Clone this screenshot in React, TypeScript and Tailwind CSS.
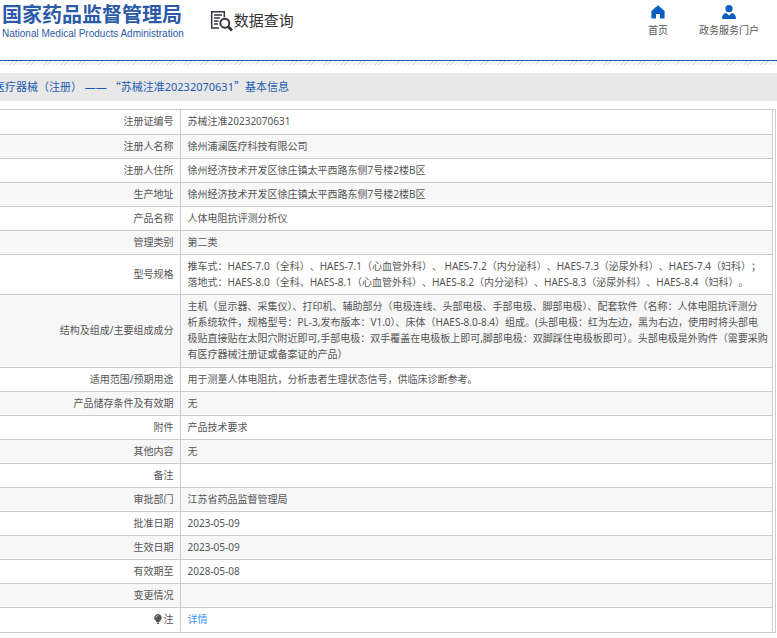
import type { ReactNode } from "react";

const detailRows: { label: string; lines: string[]; className?: string }[] = [
  { label: "注册证编号", lines: ["苏械注准20232070631"] },
  { label: "注册人名称", lines: ["徐州浦澜医疗科技有限公司"] },
  { label: "注册人住所", lines: ["徐州经济技术开发区徐庄镇太平西路东侧7号楼2楼B区"] },
  { label: "生产地址", lines: ["徐州经济技术开发区徐庄镇太平西路东侧7号楼2楼B区"] },
  { label: "产品名称", lines: ["人体电阻抗评测分析仪"] },
  { label: "管理类别", lines: ["第二类"] },
  {
    label: "型号规格",
    className: "[text-spacing-trim:space-all]",
    lines: [
      "推车式：HAES-7.0（全科）、HAES-7.1（心血管外科）、 HAES-7.2（内分泌科）、HAES-7.3（泌尿外科）、HAES-7.4（妇科）；",
      "落地式：HAES-8.0（全科、HAES-8.1（心血管外科）、HAES-8.2（内分泌科）、HAES-8.3（泌尿外科）、HAES-8.4（妇科）。",
    ],
  },
  {
    label: "结构及组成/主要组成成分",
    className: "pb-px",
    lines: [
      "主机（显示器、采集仪）、打印机、辅助部分（电极连线、头部电极、手部电极、脚部电极）、配套软件（名称：人体电阻抗评测分",
      "析系统软件，规格型号：PL-3,发布版本：V1.0）、床体（HAES-8.0-8.4）组成。(头部电极：红为左边，黑为右边，使用时将头部电",
      "极贴直接贴在太阳穴附近即可,手部电极：双手覆盖在电极板上即可,脚部电极：双脚踩住电极板即可）。头部电极是外购件（需要采购",
      "有医疗器械注册证或备案证的产品）",
    ],
  },
  { label: "适用范围/预期用途", lines: ["用于测量人体电阻抗，分析患者生理状态信号，供临床诊断参考。"] },
  { label: "产品储存条件及有效期", lines: ["无"] },
  { label: "附件", lines: ["产品技术要求"] },
  { label: "其他内容", lines: ["无"] },
  { label: "备注", lines: [] },
  { label: "审批部门", lines: ["江苏省药品监督管理局"] },
  { label: "批准日期", lines: ["2023-05-09"] },
  { label: "生效日期", lines: ["2023-05-09"] },
  { label: "有效期至", lines: ["2028-05-08"] },
  { label: "变更情况", lines: [] },
];

function SearchDocIcon() {
  return (
    <svg width="24" height="22" viewBox="0 0 24 22" fill="none" stroke="#33333b" aria-hidden="true">
      <path d="M9 18H1.700V1.700h12.600v5.500" strokeWidth="1.500" />
      <path d="M4 5h8M4 8h6M4 11h4.500M4 14h4" strokeWidth="1.300" />
      <circle cx="14.800" cy="13.200" r="4.500" strokeWidth="1.900" />
      <path d="m18 16.500 4 4" strokeWidth="2.800" />
    </svg>
  );
}

function HomeIcon() {
  return (
    <svg width="14" height="14" viewBox="0 0 14 14" fill="#0a5fc0" aria-hidden="true">
      <path d="M7 .3 13.600 6v7.600H9V9H5v4.600H.400V6z" />
    </svg>
  );
}

function UserIcon() {
  return (
    <svg width="14" height="14" viewBox="0 0 14 14" fill="#0a5fc0" aria-hidden="true">
      <circle cx="7" cy="3.700" r="3.600" />
      <path d="M0 14c0-3.800 1.500-5.500 4.200-6L7 10.500 9.800 8c2.700.500 4.200 2.200 4.200 6z" />
    </svg>
  );
}

function BulbIcon() {
  return (
    <svg width="8" height="10" viewBox="0 0 8 10" fill="#555" aria-hidden="true">
      <path d="M4 0a3.700 3.700 0 0 1 2.200 6.700L5.500 8h-3L1.800 6.700A3.700 3.700 0 0 1 4 0zM2.700 8.500h2.600L4.800 10H3.200z" />
      <path d="M2 3.500A2 2 0 0 1 3.800 1.600" stroke="#fff" strokeWidth=".7" fill="none" />
    </svg>
  );
}

function Row({ label, className, children }: { label: ReactNode; className?: string; children?: ReactNode }) {
  return (
    <tr className="h-6 border-b border-[#ccc] last:border-b-0 odd:bg-white even:bg-[#f7f7f7]">
      <th scope="row" className="w-[180px] border-r border-[#ccc] pt-[3px] pr-[6px] pb-1 text-right font-normal">
        {label}
      </th>
      <td className="pt-[3px] pb-1 pl-[7px] whitespace-nowrap">
        <div className={className}>{children}</div>
      </td>
    </tr>
  );
}

export default function App() {
  return (
    <div className="overflow-x-hidden bg-white font-['Noto_Sans','Noto_Sans_CJK_SC',sans-serif] text-[10px] leading-4 text-[#555]">
      <header className="flex h-[61px] items-start border-b border-[#1c529f] pl-[2px]">
        <div className="text-[#2b5aa8]">
          <h1 className="pt-[3px] text-[20px] leading-6 font-bold">国家药品监督管理局</h1>
          <p className="font-['Liberation_Sans',sans-serif] text-[10px] leading-[14px]">
            National Medical Products Administration
          </p>
        </div>
        <div className="ml-[26px] flex items-start pt-[10px]">
          <SearchDocIcon />
          <span className="text-[15px] leading-5 text-[#333]">数据查询</span>
        </div>
        <nav className="mr-[18px] ml-auto flex gap-[31px] pt-[5px]">
          <a href="#" className="flex flex-col items-center gap-[3px]">
            <HomeIcon />
            首页
          </a>
          <a href="#" className="flex flex-col items-center gap-[3px]">
            <UserIcon />
            政务服务门户
          </a>
        </nav>
      </header>
      <div className="h-1 bg-[repeating-linear-gradient(135deg,#d4e4f2_0_1px,#fff_1px_3px)]" />

      <h2 className="mt-2 h-7 bg-[#e8e8e8] text-[11px] leading-[26px] whitespace-nowrap text-[#1c5cb0]">
        <span className="-ml-[6px] [text-spacing-trim:space-all]">
          医疗器械（注册） —— <span className="font-['Noto_Sans_CJK_SC',sans-serif]">“</span>
          苏械注准20232070631
          <span className="font-['Noto_Sans_CJK_SC',sans-serif]">”</span>基本信息
        </span>
      </h2>

      <main className="mt-2 mr-px border-t border-r border-b border-[#ccc] pr-[2px] pb-px">
        <table className="w-full border-collapse border-r border-[#ccc]">
          <tbody>
            {detailRows.map((row) => (
              <Row key={row.label} label={row.label} className={row.className}>
                {row.lines.map((line) => (
                  <div key={line}>{line}</div>
                ))}
              </Row>
            ))}
            <Row
              label={
                <span className="flex items-center justify-end gap-0.5">
                  <BulbIcon />注
                </span>
              }
            >
              <a href="#" className="text-[#3a94f0]">
                详情
              </a>
            </Row>
          </tbody>
        </table>
      </main>
    </div>
  );
}
